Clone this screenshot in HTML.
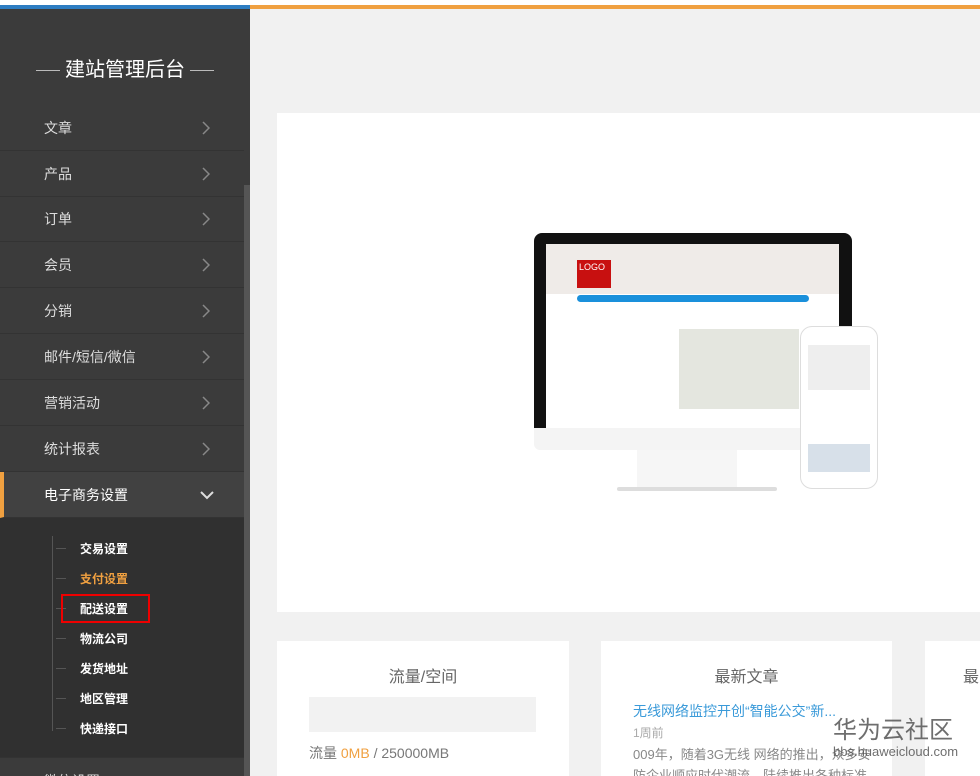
<!DOCTYPE html>
<html><head><meta charset="utf-8"><style>
*{margin:0;padding:0;box-sizing:border-box}
html,body{width:980px;height:776px;overflow:hidden}
body{background:#f1f1f1;font-family:"Liberation Sans","Noto Sans CJK SC",sans-serif;position:relative}
.top1{position:absolute;left:0;top:5px;width:250px;height:4px;background:#2d7dc2}
.top2{position:absolute;left:250px;top:5px;width:730px;height:4px;background:#f0a040}
.topw{position:absolute;left:0;top:0;width:980px;height:5px;background:#fff}
.side{position:absolute;left:0;top:9px;width:250px;height:767px;background:#3b3b3b;overflow:hidden}
.sb{position:absolute;left:244px;top:176px;width:6px;height:600px;background:#555}
.title{position:absolute;top:44px;left:0;width:250px;text-align:center;color:#fff;font-size:20px}
.title span{display:inline-block;width:24px;height:1px;background:#bbb;vertical-align:middle;margin:0 5px}
.item{position:absolute;left:0;width:244px;height:46px;border-bottom:1px solid #333;color:#ddd;font-size:14px;line-height:46px;padding-left:44px}
.item svg{position:absolute;right:34px;top:16px}
.sub{position:absolute;left:0;top:509px;width:244px;height:239px;background:#303030}
.vl{position:absolute;left:52px;top:18px;width:1px;height:195px;background:#555}
.si{position:absolute;left:80px;color:#fff;font-size:12px;font-weight:bold}
.si:before{content:"";position:absolute;left:-24px;top:8px;width:10px;height:1px;background:#555}
.card{position:absolute;background:#fff;overflow:hidden}
</style></head><body>
<div class="topw"></div><div class="top1"></div><div class="top2"></div>
<div class="side">
<div class="title"><span></span>建站管理后台<span></span></div>
<div class="item" style="top:96px">文章<svg width="8" height="14"><path d="M1 1l6 6-6 6" stroke="#888" stroke-width="1.5" fill="none"/></svg></div>
<div class="item" style="top:142px">产品<svg width="8" height="14"><path d="M1 1l6 6-6 6" stroke="#888" stroke-width="1.5" fill="none"/></svg></div>
<div class="item" style="top:187px">订单<svg width="8" height="14"><path d="M1 1l6 6-6 6" stroke="#888" stroke-width="1.5" fill="none"/></svg></div>
<div class="item" style="top:233px">会员<svg width="8" height="14"><path d="M1 1l6 6-6 6" stroke="#888" stroke-width="1.5" fill="none"/></svg></div>
<div class="item" style="top:279px">分销<svg width="8" height="14"><path d="M1 1l6 6-6 6" stroke="#888" stroke-width="1.5" fill="none"/></svg></div>
<div class="item" style="top:325px">邮件/短信/微信<svg width="8" height="14"><path d="M1 1l6 6-6 6" stroke="#888" stroke-width="1.5" fill="none"/></svg></div>
<div class="item" style="top:371px">营销活动<svg width="8" height="14"><path d="M1 1l6 6-6 6" stroke="#888" stroke-width="1.5" fill="none"/></svg></div>
<div class="item" style="top:417px">统计报表<svg width="8" height="14"><path d="M1 1l6 6-6 6" stroke="#888" stroke-width="1.5" fill="none"/></svg></div>
<div class="item" style="top:463px;background:#414141;color:#fff;border-left:4px solid #f0a040;padding-left:40px">电子商务设置<svg width="14" height="10" style="right:30px;top:19px"><path d="M1 1l6 6 6-6" stroke="#ddd" stroke-width="2" fill="none"/></svg></div>
<div class="sub"><div class="vl"></div>
<div class="si" style="top:22px">交易设置</div>
<div class="si" style="top:52px;color:#f0a040">支付设置</div>
<div class="si" style="top:82px">配送设置</div>
<div style="position:absolute;left:61px;top:76px;width:89px;height:29px;border:2px solid #e00"></div>
<div class="si" style="top:112px">物流公司</div>
<div class="si" style="top:142px">发货地址</div>
<div class="si" style="top:172px">地区管理</div>
<div class="si" style="top:202px">快递接口</div>
</div>
<div class="item" style="top:748px;border-top:1px solid #333">微信设置</div>
<div class="sb"></div>
</div>
<div class="card" style="left:277px;top:113px;width:703px;height:499px">
 <div style="position:absolute;left:257px;top:120px;width:318px;height:210px;background:#111;border-radius:8px 8px 0 0"></div>
 <div style="position:absolute;left:269px;top:131px;width:293px;height:184px;background:#fff"></div>
 <div style="position:absolute;left:269px;top:131px;width:293px;height:50px;background:#efebe8"></div>
 <div style="position:absolute;left:300px;top:147px;width:34px;height:28px;background:#c81010;color:#fff;font-size:9px;padding:2px">LOGO</div>
 <div style="position:absolute;left:300px;top:182px;width:232px;height:7px;background:#1a90db;border-radius:4px"></div>
 <div style="position:absolute;left:402px;top:216px;width:120px;height:80px;background:#e4e6df"></div>
 <div style="position:absolute;left:257px;top:315px;width:318px;height:22px;background:#f4f4f4;border-radius:0 0 6px 6px"></div>
 <div style="position:absolute;left:360px;top:337px;width:100px;height:38px;background:#f6f6f6"></div>
 <div style="position:absolute;left:340px;top:374px;width:160px;height:4px;background:#ddd;border-radius:2px"></div>
 <div style="position:absolute;left:523px;top:213px;width:78px;height:163px;background:#fff;border:1px solid #ddd;border-radius:12px"></div>
 <div style="position:absolute;left:531px;top:232px;width:62px;height:45px;background:#eee"></div>
 <div style="position:absolute;left:531px;top:331px;width:62px;height:28px;background:#d7e0e9"></div>
</div>
<div class="card" style="left:277px;top:641px;width:292px;height:135px">
 <div style="text-align:center;margin-top:22px;font-size:16px;color:#666">流量/空间</div>
 <div style="position:absolute;left:32px;top:56px;width:227px;height:35px;background:#f2f2f2"></div>
 <div style="position:absolute;left:32px;top:102px;font-size:14px;color:#777">流量 <span style="color:#f0a040">0MB</span> / 250000MB</div>
</div>
<div class="card" style="left:601px;top:641px;width:291px;height:135px">
 <div style="text-align:center;margin-top:22px;font-size:16px;color:#666">最新文章</div>
 <div style="position:absolute;left:32px;top:60px;font-size:14px;color:#3a9ad9">无线网络监控开创“智能公交”新...</div>
 <div style="position:absolute;left:32px;top:83px;font-size:12px;color:#aaa">1周前</div>
 <div style="position:absolute;left:32px;top:103px;font-size:13px;color:#888;width:225px;line-height:21px;white-space:nowrap">009年，随着3G无线 网络的推出，众多安<br>防企业顺应时代潮流，陆续推出各种标准</div>
</div>
<div class="card" style="left:925px;top:641px;width:60px;height:135px">
 <div style="position:absolute;left:38px;top:22px;font-size:16px;color:#666">最</div>
</div>
<div style="position:absolute;left:833px;top:710px;font-size:24px;color:#555;opacity:.85">华为云社区</div>
<div style="position:absolute;left:833px;top:744px;font-size:13px;color:#555;opacity:.85">bbs.huaweicloud.com</div>
</body></html>
